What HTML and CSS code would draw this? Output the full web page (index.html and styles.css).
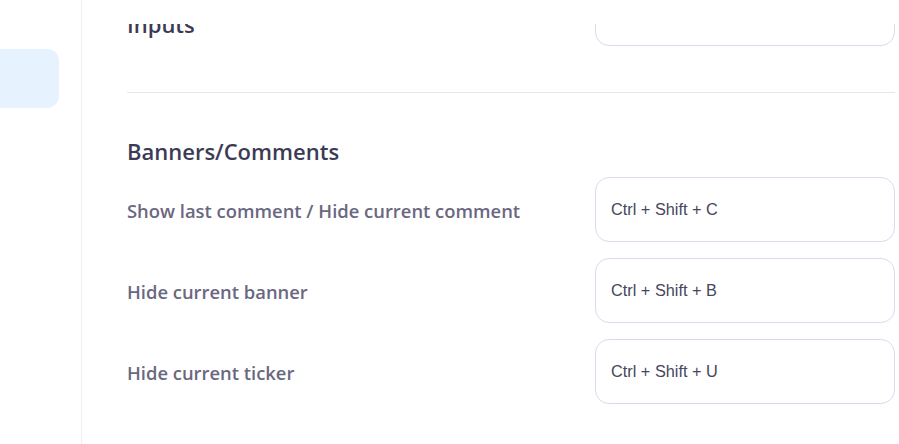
FILE: index.html
```html
<!DOCTYPE html>
<html lang="en">
<head>
    <meta charset="UTF-8">
    <title>Shortcut Settings</title>
    <link rel="stylesheet" href="styles.css">
</head>
<body>
    <div class="layout">
        <!-- Collapsed navigation -->
        <aside class="sidebar">
            <div class="nav-item active"></div>
        </aside>

        <main class="main">
            <div class="topbar"></div>
            <div class="scroll">
                <div class="scroll-inner">
                    <section class="section">
                        <div class="row row-head">
                            <h2 class="section-title">Inputs</h2>
                            <input class="key-input" type="text" value="" readonly>
                        </div>
                    </section>

                    <hr class="divider">

                    <section class="section">
                        <h2 class="section-title">Banners/Comments</h2>
                        <div class="rows">
                            <div class="row">
                                <label class="row-label">Show last comment / Hide current comment</label>
                                <input class="key-input" type="text" value="Ctrl + Shift + C" readonly>
                            </div>
                            <div class="row">
                                <label class="row-label">Hide current banner</label>
                                <input class="key-input" type="text" value="Ctrl + Shift + B" readonly>
                            </div>
                            <div class="row">
                                <label class="row-label">Hide current ticker</label>
                                <input class="key-input" type="text" value="Ctrl + Shift + U" readonly>
                            </div>
                        </div>
                    </section>
                </div>
            </div>
        </main>
    </div>
</body>
</html>
```

FILE: styles.css
```css
html, body {
    margin: 0;
    height: 100%;
    background: #fff;
    font-family: "Open Sans", "Noto Sans", Arial, sans-serif;
}
.layout {
    display: flex;
    height: 100%;
}
.sidebar {
    width: 81px;
    flex-shrink: 0;
    border-right: 1px solid #efeff3;
    padding-top: 49px;
    overflow: hidden;
}
.nav-item {
    width: 80px;
    height: 59px;
    margin-left: -21px;
    border-radius: 12px;
}
.nav-item.active {
    background-color: #e6f3ff;
}
.main {
    flex: 1;
    display: flex;
    flex-direction: column;
    min-width: 0;
}
.topbar {
    height: 24px;
    flex-shrink: 0;
    background: #fff;
}
.scroll {
    flex: 1;
    overflow: hidden;
}
.scroll-inner {
    margin-top: -43px;
    padding: 0 4px 0 45px;
}
.section-title {
    margin: 0;
    font-size: 22px;
    line-height: 32px;
    font-weight: 600;
    color: #3c3b55;
}
.row {
    display: flex;
    align-items: center;
    justify-content: space-between;
}
.row-head .section-title {
    align-self: flex-end;
    margin-bottom: 6px;
}
.rows {
    display: flex;
    flex-direction: column;
    gap: 16px;
    margin-top: 10px;
}
.row-label {
    font-size: 18.4px;
    font-weight: 550;
    color: #6a6880;
    padding-top: 2px;
}
.key-input {
    width: 300px;
    height: 65px;
    box-sizing: border-box;
    padding: 0 15px;
    border: 1px solid #dcdaea;
    border-radius: 14px;
    font-family: "Liberation Sans", Arial, sans-serif;
    font-size: 16.3px;
    color: #47465c;
    background: #fff;
    outline: none;
}
.divider {
    border: none;
    border-top: 1px solid #e6e6ee;
    margin: 46px 0 42px;
}
```
